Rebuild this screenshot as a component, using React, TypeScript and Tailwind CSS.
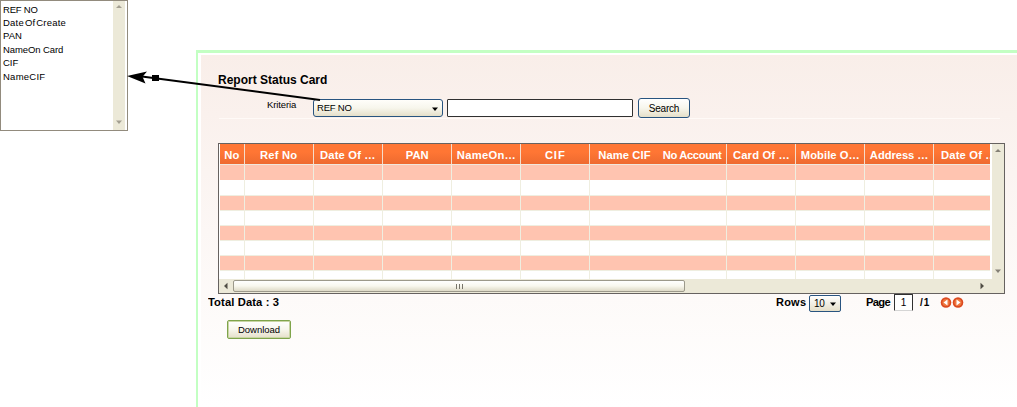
import React from "react";

const criteria = [
  { label: "REF NO", cls: "h-[13px] tracking-[-0.2px]" },
  { label: "DateOfCreate", cls: "h-[13px] tracking-[0.2px]", words: ["Date", "Of", "Create"] },
  { label: "PAN", cls: "h-[14px]" },
  { label: "NameOn Card", cls: "h-[13px] tracking-[-0.1px]" },
  { label: "CIF", cls: "h-[14px]" },
  { label: "NameCIF", cls: "h-[13px] tracking-[0.25px]" },
];

const columns = [
  { label: "No", cls: "w-[25px] border-r", text: "tracking-[0.2px]" },
  { label: "Ref No", cls: "w-[69px] border-r", text: "tracking-[0.2px]" },
  { label: "Date Of …", cls: "w-[69px] border-r", text: "tracking-[0.15px]" },
  { label: "PAN", cls: "w-[69px] border-r", text: "tracking-[0px]" },
  { label: "NameOn…", cls: "w-[69px] border-r", text: "tracking-[0.25px]" },
  { label: "CIF", cls: "w-[69px] border-r", text: "tracking-[0.8px]" },
  { label: "Name CIF", cls: "w-[69px]", text: "tracking-[0.1px]" },
  { label: "No Account", cls: "w-[68px] border-r", text: "tracking-[-0.35px]" },
  { label: "Card Of …", cls: "w-[69px] border-r", text: "tracking-[0.15px]" },
  { label: "Mobile O…", cls: "w-[69px] border-r", text: "tracking-[0.05px]" },
  { label: "Address …", cls: "w-[69px] border-r", text: "tracking-[-0.05px]" },
  { label: "Date Of …", cls: "w-[69px] shrink-0", text: "tracking-[0.15px]" },
];

const rows = [
  "h-[15px] bg-[#ffc4b0]",
  "h-[16px] bg-white border-b",
  "h-[15px] bg-[#ffc4b0] border-b",
  "h-[15px] bg-white border-b",
  "h-[15px] bg-[#ffc4b0] border-b",
  "h-[15px] bg-white border-b",
  "h-[15px] bg-[#ffc4b0] border-b",
  "h-[9px] bg-white",
];

function Triangle({ className, d }: { className: string; d: string }) {
  return (
    <svg className={className} viewBox="0 0 8 8" width="8" height="8">
      <path d={d} fill="currentColor" />
    </svg>
  );
}

const UP = "M4 2L7 5H1Z";
const DOWN = "M1 2.5H7L4 6Z";
const LEFT = "M2 4L5.5 0.8V7.2Z";
const RIGHT = "M6 4L2.5 0.8V7.2Z";

function CriteriaList() {
  return (
    <div className="flex h-[131px] w-[128px] border border-[#928b7d] bg-white">
      <ul className="w-[112px] pl-[2px] pt-[2px] text-[9.5px] leading-[13px]">
        {criteria.map((c) => (
          <li key={c.label} className={`whitespace-nowrap ${c.cls}`}>
            {c.words
              ? c.words.map((w) => <span key={w} className="mr-px">{w}</span>)
              : c.label}
          </li>
        ))}
      </ul>
      <div className="flex w-[12px] flex-col items-center justify-between bg-[#ece9d8] pb-[4px] pt-[2px] text-[#a39f91]">
        <Triangle className="" d={UP} />
        <Triangle className="" d={DOWN} />
      </div>
    </div>
  );
}

function DataGrid() {
  return (
    <div className="ml-[17px] h-[151px] w-[787px] border border-[#666260] bg-white">
      <div className="flex h-[135px]">
        <div className="w-[771px] overflow-hidden pl-px">
          <div className="flex h-[21px] w-[770px] overflow-hidden border-b border-[#f0e7dc] bg-linear-to-b from-[#ff7634] from-40% to-[#ee6a30] text-[10px] font-bold text-white">
            {columns.map((c, i) => (
              <div key={i} className={`flex shrink-0 items-center justify-center whitespace-nowrap border-[#f5ddcb] pt-[3px] ${c.cls}`}>
                <span className={`inline-block scale-x-[1.12] ${c.text}`}>{c.label}</span>
              </div>
            ))}
          </div>
          {rows.map((r, i) => (
            <div key={i} className={`flex w-[770px] overflow-hidden border-[#efeee0] ${r}`}>
              {columns.map((c, j) => (
                <div key={j} className={`shrink-0 border-[#efeee0] ${c.cls}`} />
              ))}
            </div>
          ))}
        </div>
        <div className="ml-[2px] flex w-[12px] flex-col items-center justify-between bg-[#ece9d8] pb-[4px] pt-[3px] text-[#858176]">
          <Triangle className="" d={UP} />
          <Triangle className="" d={DOWN} />
        </div>
      </div>
      <div className="flex h-[14px] items-center bg-[#ece9d8]">
        <Triangle className="ml-[3px] text-[#504d45]" d={LEFT} />
        <div className="ml-[3px] flex h-[12px] w-[452px] items-center justify-center gap-[2px] rounded-[2px] border border-[#9c998b] bg-linear-to-b from-white via-[#f8f7ee] to-[#dedac7]">
          <i className="h-[5px] w-px bg-[#77746a]" />
          <i className="h-[5px] w-px bg-[#77746a]" />
          <i className="h-[5px] w-px bg-[#77746a]" />
        </div>
        <Triangle className="ml-[293px] text-[#504d45]" d={RIGHT} />
      </div>
    </div>
  );
}

function Pager() {
  return (
    <div className="ml-[7px] flex h-[19px] items-start text-[10px] font-bold leading-[12px]">
      <span className="w-[568px] whitespace-nowrap pt-[3px]">
        <span className="inline-block origin-left scale-x-[1.12] tracking-[0.1px]">Total Data : 3</span>
      </span>
      <span className="w-[33px] pt-[3px]">
        <span className="inline-block origin-left scale-x-[1.1] tracking-[0.2px]">Rows</span>
      </span>
      <div className="mt-[1px] flex h-[17px] w-[32px] items-center justify-between rounded-[2px] border border-[#285480] bg-linear-to-b from-white to-[#e5dfc9] pl-[4px] pr-[3px] pt-px font-normal">
        <span className="tracking-[-0.4px]">10</span>
        <Triangle className="text-black" d={DOWN} />
      </div>
      <span className="ml-[25px] w-[28px] pt-[3px]">
        <span className="inline-block origin-left scale-x-[1.12] tracking-[-0.6px]">Page</span>
      </span>
      <div className="flex h-[17px] w-[19px] items-center justify-center rounded-[1px] border border-[#303030] border-b-[#d5d5d5] bg-white pt-px font-normal">1</div>
      <span className="ml-[7px] w-[20px] pt-[3px] tracking-[1px]">/1</span>
      <svg className="mt-[2px]" width="24" height="12" viewBox="0 0 24 12">
        <circle cx="6" cy="6.500" r="5.300" fill="#db4a20" />
        <circle cx="6" cy="6.500" r="3.600" fill="#ef783f" />
        <path d="M3.500 6.500L7.500 3.500V9.500Z" fill="white" />
        <circle cx="18" cy="6.500" r="5.300" fill="#db4a20" />
        <circle cx="18" cy="6.500" r="3.600" fill="#ef783f" />
        <path d="M20.500 6.500L16.500 3.500V9.500Z" fill="white" />
      </svg>
    </div>
  );
}

export default function App() {
  return (
    <div className="relative flex h-[407px] w-[1017px] items-start overflow-hidden bg-white font-['Liberation_Sans',Arial,sans-serif] text-black">
      <aside className="w-[196px] shrink-0">
        <CriteriaList />
      </aside>
      <main className="mt-[50px] h-[357px] w-[821px] border-l-2 border-t-[3px] border-[#c3ffc3] pl-[3px] pt-[2px]">
        <div className="h-[352px] bg-linear-to-b from-[#f9eee9] via-[#fcf7f5] to-white">
          <h1 className="ml-[17px] h-[43px] pt-[17px] text-[12px] font-bold leading-[16px]">Report Status Card</h1>
          <div className="ml-[18px] flex h-[21px] w-[781px] items-start border-b border-[#fffaf7] text-[9.5px]">
            <span className="ml-[48px] w-[46px] pt-[1px] leading-[12px] tracking-[-0.1px]">Kriteria</span>
            <div className="mt-[1px] flex h-[18px] w-[130px] items-center justify-between rounded-[3px] border border-[#285480] bg-linear-to-b from-[#fffefa] via-[#f7f6ec] to-[#e5dfc9] pl-[3px] pr-[3px] pt-px">
              <span className="tracking-[-0.2px]">REF NO</span>
              <Triangle className="text-black" d={DOWN} />
            </div>
            <div className="ml-[4px] mt-[1px] h-[18px] w-[186px] rounded-[1px] border border-[#303030] bg-white" />
            <button className="ml-[5px] h-[20px] w-[52px] rounded-[3px] border border-[#285480] bg-linear-to-b from-white via-[#f7f6ec] to-[#e5dfc9] text-[10px] leading-[19px] tracking-[-0.2px]">Search</button>
          </div>
          <div className="h-[24px]" />
          <DataGrid />
          <Pager />
          <button className="ml-[26px] mt-[7px] h-[19px] w-[64px] rounded-[2px] border border-[#7fa44b] bg-linear-to-b from-white via-[#f7f6ec] to-[#e5dfc9] text-[9.5px] leading-[18px] shadow-[inset_0_0_0_1px_#c9d5a5]">Download</button>
        </div>
      </main>
      <svg className="pointer-events-none absolute left-0 top-0" width="330" height="130" viewBox="0 0 330 130">
        <path d="M140 76.300L320 100" stroke="black" strokeWidth="2" />
        <path d="M127 76L147 71.500L142.500 76.700L145.500 83.500Z" fill="black" />
        <rect x="152" y="75" width="7" height="6" fill="black" />
      </svg>
    </div>
  );
}
